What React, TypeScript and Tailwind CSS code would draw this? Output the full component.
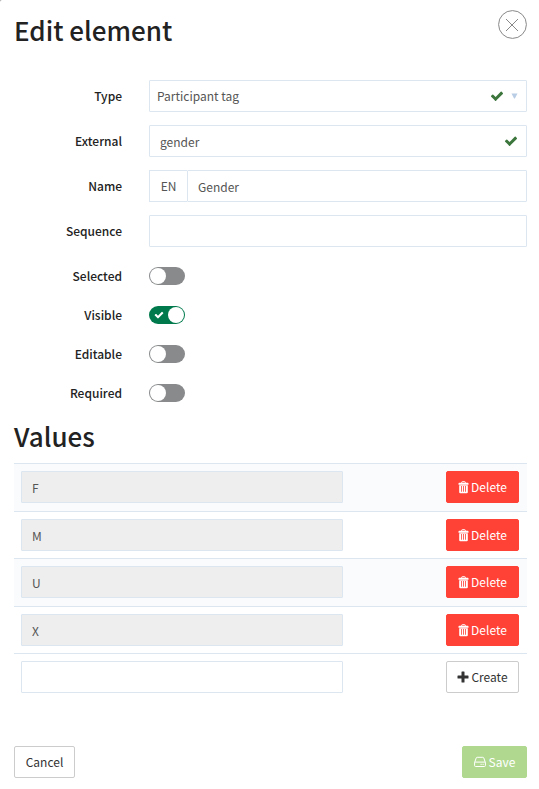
import { useState } from "react";
import type { ReactNode } from "react";
import clsx from "clsx";

const INPUT =
  "h-8 w-full rounded-[1px] border border-[#dbe6f1] bg-white px-[10px] text-xs text-[#555] outline-none";

const BUTTON = "inline-flex h-8 items-center justify-center rounded-[2px] border text-xs";

function CheckIcon({ className }: { className?: string }) {
  return (
    <svg viewBox="0 0 1792 1792" fill="currentColor" className={className} aria-hidden="true">
      <path d="M1671 566q0 40-28 68l-724 724-136 136q-28 28-68 28t-68-28l-136-136-362-362q-28-28-28-68t28-68l136-136q28-28 68-28t68 28l294 295 656-657q28-28 68-28t68 28l136 136q28 28 28 68z" />
    </svg>
  );
}

function PlusIcon() {
  return (
    <svg viewBox="0 0 12 12" fill="currentColor" className="size-3" aria-hidden="true">
      <path d="M5 .5h2q.5 0 .5.5v3.5H11q.5 0 .5.5v2q0 .5-.5.5H7.5V11q0 .5-.5.5H5q-.5 0-.5-.5V7.5H1Q.5 7.5.5 7V5q0-.5.5-.5h3.5V1q0-.5.5-.5z" />
    </svg>
  );
}

function TrashIcon() {
  return (
    <svg viewBox="0 0 11 13" className="h-[13px] w-[11px]" aria-hidden="true">
      <path d="M3.7 2V1.3Q3.7.7 4.3.7h2.4q.6 0 .6.6V2" fill="none" stroke="currentColor" />
      <path
        fill="currentColor"
        fillRule="evenodd"
        d="M1.2 1.7h8.6q.7 0 .7.7v1.3H.5V2.4q0-.7.7-.7zM1.2 4.2h8.6v7q0 1.1-1.1 1.1H2.3q-1.1 0-1.1-1.1zM3 5v5.8h.8V5zM5.1 5v5.8h.8V5zM7.2 5v5.8H8V5z"
      />
    </svg>
  );
}

function DriveIcon() {
  return (
    <svg viewBox="0 0 12 12" fill="none" stroke="currentColor" className="size-3" aria-hidden="true">
      <path d="M.6 6.6 2.2 2Q2.5 1.3 3.2 1.3h5.6Q9.5 1.3 9.8 2l1.6 4.6v3q0 .9-.9.9h-9q-.9 0-.9-.9v-3q0-.5.5-.5h9.8q.5 0 .5.5" />
      <path d="M6.6 8.4h1M8.6 8.4h1" strokeWidth="1.1" />
    </svg>
  );
}

function Field({ id, label, children }: { id: string; label: string; children: ReactNode }) {
  return (
    <div className="flex items-center gap-[27px]">
      <label htmlFor={id} className="w-[108px] shrink-0 text-right text-xs leading-5 font-medium text-[#222]">
        {label}
      </label>
      <div className="relative min-w-0 flex-1">{children}</div>
    </div>
  );
}

function Toggle({ id, label, initial = false }: { id: string; label: string; initial?: boolean }) {
  const [on, setOn] = useState(initial);

  return (
    <Field id={id} label={label}>
      <span
        className={clsx(
          "relative flex h-[18px] w-9 items-center rounded-full px-px",
          on ? "justify-end bg-[#007a4d]" : "justify-start bg-[#888a8c]"
        )}
      >
        <input
          id={id}
          type="checkbox"
          checked={on}
          onChange={(e) => setOn(e.target.checked)}
          className="absolute inset-0 cursor-pointer appearance-none"
        />
        {on && <CheckIcon className="mr-1 size-[10px] text-white" />}
        <span className="pointer-events-none size-4 rounded-full bg-white" />
      </span>
    </Field>
  );
}

const values = ["F", "M", "U", "X"];

export default function App() {
  return (
    <div className="bg-[#999]">
      <form
        className="rounded-tl-[2px] bg-white pt-[10px] pr-3 pb-[11px] pl-[14px] font-['Noto_Sans_CJK_SC',sans-serif] text-[#222]"
        onSubmit={(e) => e.preventDefault()}
      >
        <header className="flex items-start justify-between">
          <h1 className="text-[26px] leading-10 font-medium">Edit element</h1>
          <button type="button" aria-label="Close" className="text-[#888]">
            <svg viewBox="0 0 29 29" fill="none" stroke="currentColor" className="size-[29px]">
              <circle cx="14.5" cy="14.5" r="13.9" />
              <path d="m8 9 12 12m0-12L8 21" />
            </svg>
          </button>
        </header>

        <div className="mt-[30px] flex flex-col gap-[13px]">
          <Field id="type" label="Type">
            <select
              id="type"
              className="block h-8 w-full appearance-none rounded-[1px] border border-[#dbe6f1] bg-white px-[7px] text-xs text-[#555]"
            >
              <option>Participant tag</option>
            </select>
            <span className="pointer-events-none absolute inset-y-0 right-[9px] flex items-center gap-[7px]">
              <CheckIcon className="size-[14px] text-[#3c763d]" />
              <svg viewBox="0 0 7 6" className="h-[6px] w-[7px] text-[#b9cde5]" fill="currentColor">
                <path d="M.5.5h6L3.9 5.5h-.8z" />
              </svg>
            </span>
          </Field>
          <Field id="external" label="External">
            <input id="external" defaultValue="gender" className={INPUT} />
            <CheckIcon className="pointer-events-none absolute top-[9px] right-[9px] size-[14px] text-[#3c763d]" />
          </Field>
          <Field id="name" label="Name">
            <div className="flex">
              <span className="flex h-8 w-[38px] shrink-0 items-center justify-center border border-r-0 border-[#dbe6f1] text-xs text-[#555]">
                EN
              </span>
              <input id="name" defaultValue="Gender" className={INPUT} />
            </div>
          </Field>
          <Field id="sequence" label="Sequence">
            <input id="sequence" className={INPUT} />
          </Field>
        </div>

        <div className="mt-[19px] flex flex-col gap-[19px]">
          <Toggle id="selected" label="Selected" />
          <Toggle id="visible" label="Visible" initial />
          <Toggle id="editable" label="Editable" />
          <Toggle id="required" label="Required" />
        </div>

        <h2 className="mt-[13px] mb-[7px] text-[26px] leading-10 font-medium">Values</h2>

        <table className="w-full border-separate border-spacing-0">
          <tbody>
            {values.map((value) => (
              <tr key={value} className="group odd:bg-[#f9fbfd]">
                <td className="border-t border-[#dbe6f1] px-[7px] pt-[7px] pb-2 group-even:pb-[7px]">
                  <input
                    aria-label={`Value ${value}`}
                    defaultValue={value}
                    disabled
                    className="block h-8 w-full rounded-[1px] border border-[#dbe6f1] bg-[#eee] px-[10px] text-xs text-[#555]"
                  />
                </td>
                <td className="w-[177px] border-t border-[#dbe6f1] px-2 pt-[7px] pb-2 text-right group-even:pb-[7px]">
                  <button
                    type="button"
                    className={clsx(BUTTON, "w-[73px] gap-[2px] border-[#ff4136] bg-[#ff4136] align-top text-white")}
                  >
                    <TrashIcon />
                    Delete
                  </button>
                </td>
              </tr>
            ))}
            <tr>
              <td className="border-t border-[#dbe6f1] px-[7px] py-[7px]">
                <input aria-label="New value" className={clsx(INPUT, "block")} />
              </td>
              <td className="w-[177px] border-t border-[#dbe6f1] px-2 py-[7px] text-right">
                <button
                  type="button"
                  className={clsx(BUTTON, "w-[73px] gap-[2px] border-[#ccc] bg-white align-top text-[#333]")}
                >
                  <PlusIcon />
                  Create
                </button>
              </td>
            </tr>
          </tbody>
        </table>

        <footer className="mt-[46px] flex justify-between">
          <button type="button" className={clsx(BUTTON, "w-[61px] border-[#ccc] bg-white text-[#333]")}>
            Cancel
          </button>
          <button
            type="submit"
            disabled
            className={clsx(BUTTON, "w-[65px] gap-[3px] border-[#b0d98f] bg-[#b0d98f] text-white")}
          >
            <DriveIcon />
            Save
          </button>
        </footer>
      </form>
    </div>
  );
}
